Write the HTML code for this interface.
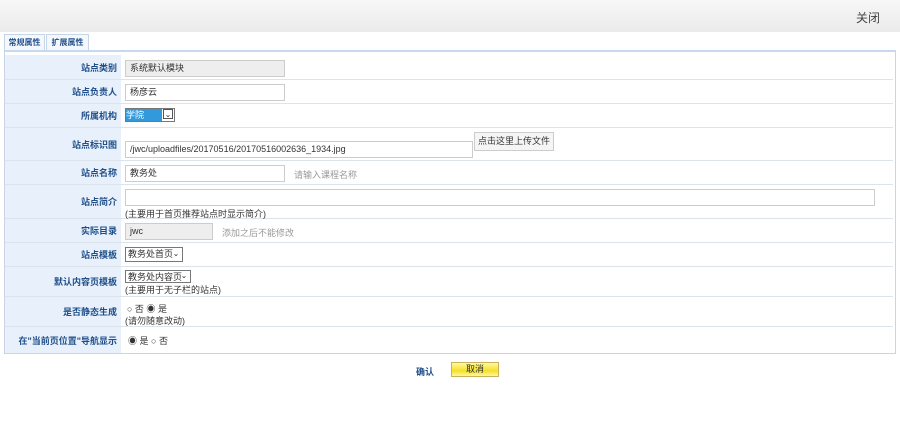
<!DOCTYPE html>
<html><head><meta charset="utf-8"><style>
*{margin:0;padding:0;box-sizing:border-box}
body{width:900px;height:446px;background:#fff;font-family:"Liberation Sans","Noto Sans CJK SC",sans-serif;font-size:9px;color:#333;position:relative;overflow:hidden}
.hd{position:absolute;left:0;top:0;width:900px;height:32px;background:linear-gradient(#f7f7f7,#ebebeb)}
.hd span{position:absolute;right:20px;top:9px;font-size:12px;color:#444}
.tab{position:absolute;top:34px;height:17px;border:1px solid #c5d6e8;border-bottom:none;background:#f4f8fc;color:#1f4e8a;font-weight:bold;font-size:8px;line-height:15px;text-align:center;white-space:nowrap;overflow:hidden}
.box{position:absolute;left:4px;top:50px;width:892px;height:304px;border:1px solid #c9d5e2;border-top:2px solid #c7d9ee}
.row{position:absolute;left:5px;width:888px;border-bottom:1px solid #dde3ea}
.lab{position:absolute;left:0;top:0;bottom:0;width:116px;background:#e8f1fb;color:#1f4e8a;font-weight:bold;text-align:right;padding-right:4px;display:flex;align-items:center;justify-content:flex-end;white-space:nowrap}
.in{position:absolute;border:1px solid #ccc;background:#fff;padding-left:4px;font-size:9px;line-height:15px;color:#333;white-space:nowrap;overflow:hidden}
.sel{position:absolute;border:1px solid #777;background:#fff;font-size:9px;line-height:12px;padding-left:2px;white-space:nowrap;overflow:hidden}
.ar{position:absolute;right:1px;top:1px;width:10px;height:10px;font-size:8px;line-height:9px;text-align:center}
.t{position:absolute;font-size:9px;color:#333;white-space:nowrap}
.g{color:#999}
</style></head><body>
<div class="hd"><span>关闭</span></div>
<div class="tab" style="left:4px;width:41px">常规属性</div>
<div class="tab" style="left:46px;width:43px">扩展属性</div>
<div class="box"></div>
<div class="row" style="top:55px;height:25px"><div class="lab">站点类别</div></div>
<div class="row" style="top:80px;height:24px"><div class="lab">站点负责人</div></div>
<div class="row" style="top:104px;height:24px"><div class="lab">所属机构</div></div>
<div class="row" style="top:128px;height:33px"><div class="lab">站点标识图</div></div>
<div class="row" style="top:161px;height:24px"><div class="lab">站点名称</div></div>
<div class="row" style="top:185px;height:34px"><div class="lab">站点简介</div></div>
<div class="row" style="top:219px;height:24px"><div class="lab">实际目录</div></div>
<div class="row" style="top:243px;height:24px"><div class="lab">站点模板</div></div>
<div class="row" style="top:267px;height:30px"><div class="lab">默认内容页模板</div></div>
<div class="row" style="top:297px;height:30px"><div class="lab">是否静态生成</div></div>
<div class="row" style="top:327px;height:26px;border-bottom:none"><div class="lab">在"当前页位置"导航显示</div></div>

<div class="in" style="left:125px;top:60px;width:160px;height:17px;background:#eee">系统默认模块</div>
<div class="in" style="left:125px;top:84px;width:160px;height:17px">杨彦云</div>
<div class="sel" style="left:125px;top:108px;width:50px;height:14px;padding:0"><span style="display:inline-block;width:36px;height:12px;background:#3399dd;color:#fff">学院</span><span class="ar" style="border:1px solid #555;top:0">⌄</span></div>
<div class="in" style="left:125px;top:141px;width:348px;height:17px">/jwc/uploadfiles/20170516/20170516002636_1934.jpg</div>
<div class="in" style="left:474px;top:132px;width:80px;height:19px;background:#f5f5f5;text-align:center;padding:0;line-height:17px">点击这里上传文件</div>
<div class="in" style="left:125px;top:165px;width:160px;height:17px">教务处</div>
<div class="t g" style="left:294px;top:168px">请输入课程名称</div>
<div class="in" style="left:125px;top:189px;width:750px;height:17px"></div>
<div class="t" style="left:125px;top:207px">(主要用于首页推荐站点时显示简介)</div>
<div class="in" style="left:125px;top:223px;width:88px;height:17px;background:#eee">jwc</div>
<div class="t g" style="left:222px;top:226px">添加之后不能修改</div>
<div class="sel" style="left:125px;top:247px;width:58px;height:15px">教务处首页<span class="ar">⌄</span></div>
<div class="sel" style="left:125px;top:270px;width:66px;height:13px">教务处内容页<span class="ar" style="top:0">⌄</span></div>
<div class="t" style="left:125px;top:283px">(主要用于无子栏的站点)</div>
<div class="t" style="left:127px;top:302px">○ 否 ◉ 是</div>
<div class="t" style="left:125px;top:314px">(请勿随意改动)</div>
<div class="t" style="left:128px;top:334px">◉ 是 ○ 否</div>
<div class="t" style="left:416px;top:365px;color:#1f4e8a;font-weight:bold">确认</div>
<div style="position:absolute;left:451px;top:362px;width:48px;height:15px;border:1px solid #c8b25a;background:linear-gradient(#fff9a0,#f5e02a 60%,#fff7a0);text-align:center;font-size:9px;line-height:13px">取消</div>
</body></html>
